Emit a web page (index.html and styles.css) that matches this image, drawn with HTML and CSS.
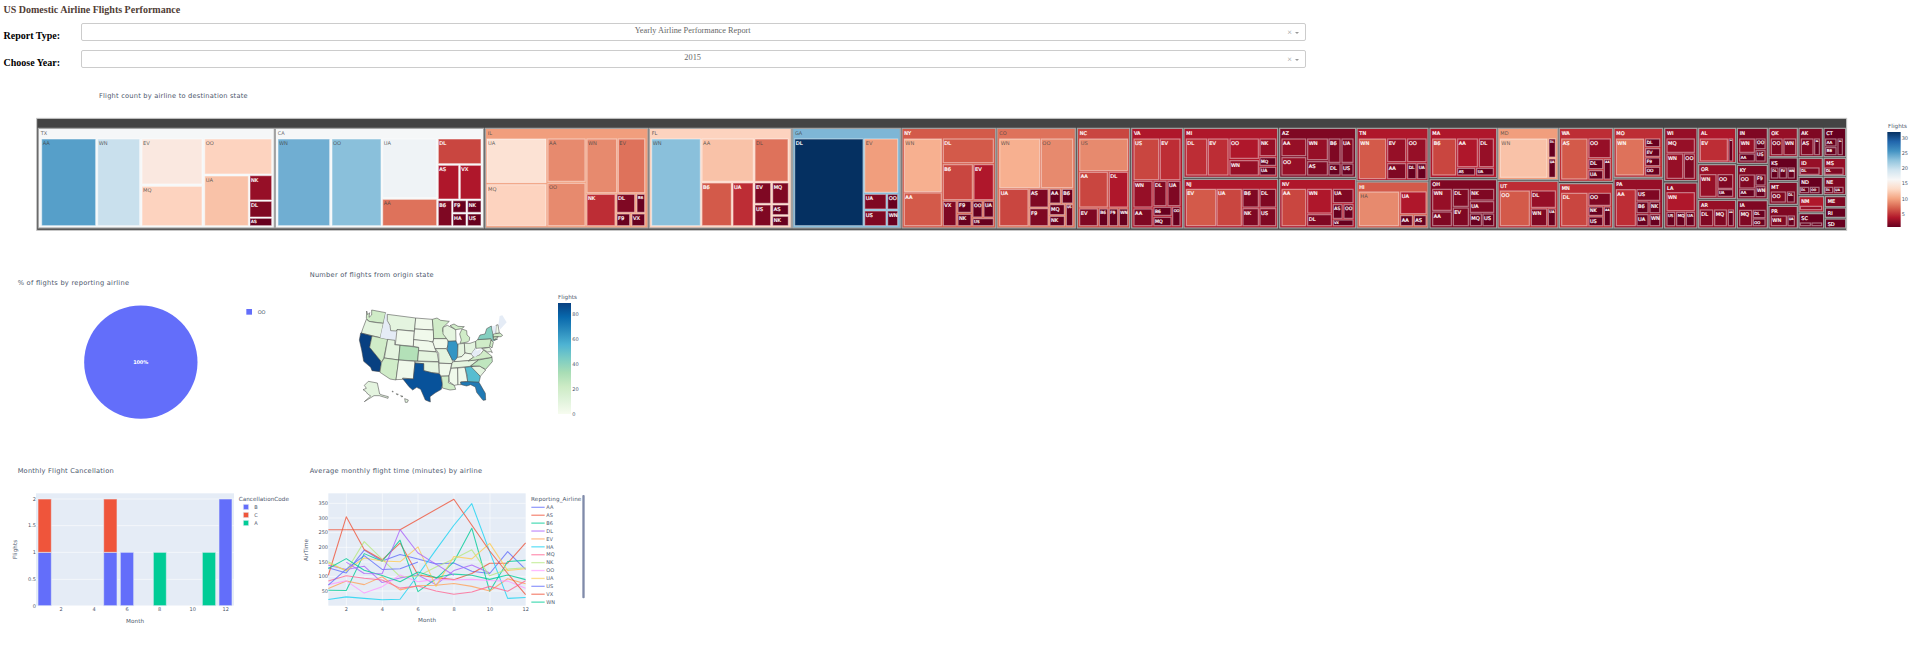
FILE: index.html
```html
<!DOCTYPE html>
<html lang="en">
<head>
<meta charset="utf-8">
<title>US Domestic Airline Flights Performance</title>
<link rel="stylesheet" href="styles.css">
</head>
<body>
<header class="controls">
  <h1 class="page-title">US Domestic Airline Flights Performance</h1>
  <div class="field">
    <span class="field-label">Report Type:</span>
    <div class="select"><span class="select-value">Yearly Airline Performance Report</span><span class="select-clear">×</span><span class="select-arrow"></span></div>
  </div>
  <div class="field">
    <span class="field-label">Choose Year:</span>
    <div class="select"><span class="select-value select-value-year">2015</span><span class="select-clear">×</span><span class="select-arrow"></span></div>
  </div>
</header>
<main>
  <svg class="treemap" viewBox="0 0 5754 528" id="treemap">
    <defs>
      <linearGradient id="rdbu" x1="0" y1="1" x2="0" y2="0">
        <stop offset="0" stop-color="#67001f"/><stop offset=".1" stop-color="#b2182b"/><stop offset=".2" stop-color="#d6604d"/><stop offset=".3" stop-color="#f4a582"/><stop offset=".4" stop-color="#fddbc7"/><stop offset=".5" stop-color="#f7f7f7"/><stop offset=".6" stop-color="#d1e5f0"/><stop offset=".7" stop-color="#92c5de"/><stop offset=".8" stop-color="#4393c3"/><stop offset=".9" stop-color="#2166ac"/><stop offset="1" stop-color="#053061"/>
      </linearGradient>
    </defs>
    <text class="title" x="297" y="41" textLength="446">Flight count by airline to destination state</text>
    <g id="cells"></g>
    <g transform="translate(4800 84)">
      <text class="legend-title" x="864" y="47" textLength="57">Flights</text>
      <rect x="862" y="60" width="40" height="285" fill="url(#rdbu)"/>
      <g class="tick"><text x="905" y="83">30</text><text x="905" y="128">25</text><text x="905" y="174">20</text><text x="905" y="220">15</text><text x="905" y="266">10</text><text x="905" y="311">5</text></g>
    </g>
  </svg>
  <div class="row">
    <svg class="panel" viewBox="0 0 900 585">
      <text class="title" x="53" y="75" textLength="334">% of flights by reporting airline</text>
      <circle cx="422.500" cy="306.500" r="170" fill="#636efa"/>
      <text class="pie-label" x="422" y="312" textLength="45">100%</text>
      <rect x="739" y="147" width="17" height="17" fill="#636efa"/>
      <text class="tick" x="773" y="162">OO</text>
    </svg>
    <svg class="panel" viewBox="0 0 900 585">
      <defs>
        <linearGradient id="gnbu" x1="0" y1="1" x2="0" y2="0">
          <stop offset="0" stop-color="#f7fcf0"/><stop offset=".125" stop-color="#e0f3db"/><stop offset=".25" stop-color="#ccebc5"/><stop offset=".375" stop-color="#a8ddb5"/><stop offset=".5" stop-color="#7bccc4"/><stop offset=".625" stop-color="#4eb3d3"/><stop offset=".75" stop-color="#2b8cbe"/><stop offset=".875" stop-color="#0868ac"/><stop offset="1" stop-color="#084081"/>
        </linearGradient>
      </defs>
      <text class="title" x="29" y="51" textLength="372">Number of flights from origin state</text>
      <g id="states" class="states"></g>
      <text class="legend-title" x="774" y="117" textLength="57">Flights</text>
      <rect x="774" y="129" width="39" height="333" fill="url(#gnbu)"/>
      <g class="tick"><text x="817" y="168">80</text><text x="817" y="242">60</text><text x="817" y="317">40</text><text x="817" y="392">20</text><text x="817" y="467">0</text></g>
    </svg>
  </div>
  <div class="row">
    <svg class="panel" viewBox="0 0 900 585">
      <text class="title" x="53" y="54" textLength="288">Monthly Flight Cancellation</text>
      <rect class="plot" x="108" y="115" width="594" height="338"/>
      <path class="grid" d="M108 132H702M108 212H702M108 292H702M108 373H702M108 452H702"/>
      <g class="bars">
        <rect x="114" y="292" width="40" height="160" fill="#636efa"/><rect x="114" y="132" width="40" height="160" fill="#ef553b"/>
        <rect x="311" y="292" width="40" height="160" fill="#636efa"/><rect x="311" y="132" width="40" height="160" fill="#ef553b"/>
        <rect x="361" y="292" width="40" height="160" fill="#636efa"/>
        <rect x="460" y="292" width="39" height="160" fill="#00cc96"/>
        <rect x="607" y="292" width="40" height="160" fill="#00cc96"/>
        <rect x="657" y="132" width="39" height="320" fill="#636efa"/>
        <rect x="730" y="148" width="16" height="16" fill="#636efa"/><rect x="730" y="172" width="16" height="16" fill="#ef553b"/><rect x="730" y="196" width="16" height="16" fill="#00cc96"/>
      </g>
      <g class="tick end"><text x="108" y="137">2</text><text x="108" y="217">1.5</text><text x="108" y="297">1</text><text x="108" y="378">0.5</text><text x="108" y="458">0</text></g>
      <g class="tick mid"><text x="183" y="468">2</text><text x="282" y="468">4</text><text x="381" y="468">6</text><text x="479" y="468">8</text><text x="578" y="468">10</text><text x="677" y="468">12</text></g>
      <text class="axis" x="378" y="504" textLength="54">Month</text>
      <text class="axis" transform="translate(51 312) rotate(-90)" textLength="58">Flights</text>
      <text class="legend-title" x="716" y="138" textLength="151">CancellationCode</text>
      <g class="tick"><text x="763" y="162">B</text><text x="763" y="186">C</text><text x="763" y="210">A</text></g>
    </svg>
    <svg class="panel" viewBox="15 0 900 585">
      <text class="title" x="44" y="54" textLength="517">Average monthly flight time (minutes) by airline</text>
      <rect class="plot" x="100" y="115" width="592" height="337"/>
      <path class="grid" d="M100 145H692M100 189H692M100 233H692M100 277H692M100 321H692M100 364H692M100 408H692M154 115V452M262 115V452M369 115V452M477 115V452M585 115V452"/>
      <g id="series" class="series"></g>
      <g class="tick end"><text x="99" y="150">350</text><text x="99" y="194">300</text><text x="99" y="238">250</text><text x="99" y="282">200</text><text x="99" y="326">150</text><text x="99" y="370">100</text><text x="99" y="413">50</text></g>
      <g class="tick mid"><text x="154" y="468">2</text><text x="262" y="468">4</text><text x="369" y="468">6</text><text x="477" y="468">8</text><text x="585" y="468">10</text><text x="692" y="468">12</text></g>
      <text class="axis" x="369" y="501" textLength="54">Month</text>
      <text class="axis" transform="translate(39 318) rotate(-90)" textLength="66">AirTime</text>
      <text class="legend-title" x="708" y="138" textLength="151">Reporting_Airline</text>
      <g id="legend"></g>
      <rect x="862" y="120" width="7" height="310" rx="3" fill="#808baa"/>
    </svg>
  </div>
</main>
<script src="charts.js"></script>
</body>
</html>
```
FILE: styles.css
```css
body {
  margin: 0;
  background: #fff;
  overflow: hidden;
  font-family: "Liberation Serif", "Times New Roman", serif;
}

.controls {
  box-sizing: border-box;
  height: 84px;
  padding: 5px 0 0 3.5px;
}

.page-title {
  margin: 0 0 8px;
  height: 10px;
  font-size: 10px;
  line-height: 10px;
  color: #503d36;
}

.field {
  display: flex;
  align-items: flex-start;
  height: 27px;
}

.field-label {
  width: 77.5px;
  padding-top: 7px;
  font-size: 10px;
  line-height: 12px;
  font-weight: bold;
  color: #000;
  white-space: nowrap;
}

.select {
  display: flex;
  box-sizing: border-box;
  width: 1225px;
  height: 18px;
  padding-right: 6px;
  border: 1px solid #ccc;
  border-radius: 2px;
  color: #666;
  font-size: 8.3px;
  line-height: 14px;
}

.select-value {
  flex: 1;
  padding-left: 16px;
  text-align: center;
}

.select-clear {
  color: #999;
  line-height: 17px;
}

.select-arrow {
  margin: 8px 0 0 3px;
  width: 0;
  height: 0;
  border: 2px solid transparent;
  border-top: 2.5px solid #999;
}

svg {
  display: block;
  font-family: "DejaVu Sans", Verdana, sans-serif;
}

.treemap {
  width: 1918px;
  height: 176px;
}

.row {
  display: flex;
  height: 195px;
}

.panel {
  width: 300px;
  height: 195px;
}

.title {
  font-size: 20px;
  fill: #4b566b;
}

.legend-title {
  font-size: 17px;
  fill: #4b566b;
}

.axis {
  font-size: 17px;
  fill: #4b566b;
}

.tick {
  font-size: 15px;
  fill: #4b566b;
}

.end { text-anchor: end; }
.mid { text-anchor: middle; }

.pie-label {
  font-size: 15px;
  font-weight: bold;
  text-anchor: middle;
  fill: #fff;
}

.plot { fill: #e5ecf6; }

.grid {
  stroke: #fff;
  stroke-width: 2.2;
  stroke-opacity: .8;
  fill: none;
}

.bars rect {
  stroke: #e5ecf6;
  stroke-opacity: .6;
  stroke-width: 3;
}

.series path {
  fill: none;
  stroke-width: 3.2;
  stroke-opacity: .8;
  stroke-linejoin: round;
}

.states path {
  stroke: #444;
  stroke-opacity: .8;
  stroke-width: 2;
  stroke-linejoin: round;
}

.states .no-data { stroke: none; }

.root { fill: #444; stroke: #c8c8c8; stroke-width: 3; }

.state {
  stroke: #a5a5a5;
  stroke-width: 3.5;
}

.leaf {
  stroke: #fff;
  stroke-opacity: .45;
  stroke-width: 3.5;
}

.cell-text { fill: #fff; stroke: #fff; stroke-width: .6; }
.cell-text.dark { fill: #444; stroke: none; fill-opacity: .85; }
```
FILE: charts.js
```js
const NS = 'http://www.w3.org/2000/svg';

function add(parent, tag, attrs, text) {
  const el = document.createElementNS(NS, tag);
  for (const k in attrs) el.setAttribute(k, attrs[k]);
  if (text) el.textContent = text;
  parent.appendChild(el);
  return el;
}

// Colour scale steps, from few flights (z) to many (f)
const scale = {
  z: '#67001f', y: '#7f0823', x: '#960f27', w: '#af172b', v: '#bd2d35', u: '#c94640',
  t: '#d35a4a', s: '#de725b', r: '#e78a6e', q: '#f19e7d', p: '#f7b090', o: '#f9c2a8',
  n: '#fdd3bf', m: '#fce2d4', l: '#fae8e0', k: '#eff3f6', K: '#f5f7f8', j: '#c9e0ed',
  i: '#8ac0db', h: '#70aed2', H: '#7eb6d6', g: '#569fc9', f: '#053061'
};

// Each section: x origin, states and leaves as "name colour x0 y0 x1 y1"
const sections = [
  [30, 'TX K 25 48 733 348',
   'AA g 34 80 198 342;WN j 202 80 330 342;EV l 335 80 517 217;MQ n 335 222 517 342;OO n 523 80 726 187;UA o 523 191 656 342;NK x 659 190 726 265;DL y 659 267 726 316;AS z 659 318 726 342'],
  [320, 'CA K -134 48 491 348;IL q 496 48 984 348',
   'WN h -127 80 30 342;OO i 35 80 184 342;UA k 187 80 351 258;AA s 187 261 351 342;DL u 354 80 484 156;AS w 354 159 417 262;VX w 420 159 484 262;B6 y 354 265 396 342;F9 z 398 265 439 302;NK z 442 265 484 302;HA z 398 305 439 342;US z 442 305 484 342;UA m 500 80 679 213;MQ n 500 217 679 342;AA r 683 80 796 209;OO r 683 213 796 342;WN r 800 80 891 243;NK v 800 246 886 342'],
  [610, 'FL n 118 48 544 348;GA H 548 48 871 348',
   'EV s 24 80 105 243;DL y 20 246 75 302;B6 z 80 246 105 302;F9 z 20 305 60 342;VX z 65 305 105 342;WN i 124 80 272 342;AA o 275 80 431 209;DL s 434 80 535 209;B6 t 275 212 365 342;UA v 368 212 430 342;EV y 434 212 483 275;MQ y 487 212 536 275;US y 434 278 483 342;AS z 487 278 536 309;NK z 487 312 536 342;DL f 553 80 760 342;EV q 763 80 864 242;UA y 763 246 829 292;US y 763 296 829 342;OO z 832 246 864 292;WN z 832 296 864 342'],
  [890, 'NY t 36 48 317 348;CO s 321 48 556 348;NC u 562 48 719 348',
   'WN p 42 80 155 240;AA t 42 242 155 342;DL t 159 80 311 153;B6 u 159 157 248 264;EV w 251 157 311 264;VX y 159 267 199 342;F9 z 203 267 244 302;NK z 203 306 244 342;OO z 248 267 277 316;UA z 281 267 311 316;US z 248 319 311 342;WN p 328 80 450 228;OO r 453 80 549 228;UA u 328 231 415 342;AS y 419 231 475 286;F9 y 419 289 475 342;AA z 479 231 512 274;B6 z 516 231 549 274;MQ z 479 277 524 309;NK z 479 312 524 342;US z 528 277 549 342;US r 568 80 714 177;AA u 568 180 653 286;DL w 657 180 714 286;EV y 568 290 623 342;B6 z 627 290 654 342;F9 z 657 290 684 342;WN z 687 290 714 342'],
  [1130, 'VA w 5 48 158 348;MI w 162 48 443 196;NJ w 162 201 443 348;AZ y 449 48 677 196;NV w 449 201 677 348',
   'US u 11 80 87 204;EV v 90 80 151 204;WN x 11 207 67 286;DL y 71 207 109 282;UA y 113 207 151 282;AA y 11 290 67 342;B6 z 71 285 124 311;MQ z 71 315 124 342;OO z 127 285 151 342;DL v 168 80 231 190;EV v 234 80 295 190;OO w 299 80 386 140;WN x 299 145 386 190;NK x 389 80 438 132;MQ z 389 136 438 161;UA z 389 165 438 190;EV t 168 231 258 342;UA u 260 231 335 342;B6 y 338 231 386 286;DL y 389 231 438 286;NK y 338 289 386 342;US y 389 289 438 342;AA x 455 80 528 132;OO x 455 136 528 190;WN x 532 80 593 144;AS y 532 148 593 190;B6 y 596 80 631 152;UA y 635 80 670 152;DL z 596 155 631 190;US z 635 155 670 190;AA u 455 231 528 342;WN w 532 231 605 304;DL y 532 307 605 342;UA y 609 231 670 273;AS z 609 277 637 320;OO z 641 277 670 320;VX z 609 323 670 342'],
  [1350, 'TN w 21 48 234 206;HI t 21 209 234 348;MA w 240 48 440 197;OH y 240 202 440 348;MD q 444 48 624 203;UT v 444 207 624 348;WA v 628 48 788 208;MN v 628 214 788 348',
   'WN t 27 80 108 201;EV x 112 80 168 150;OO x 172 80 229 150;AA y 112 154 168 201;DL z 172 154 199 201;UA z 202 154 229 201;HA r 27 239 147 342;UA w 151 239 229 306;AA z 151 310 188 342;AS z 192 310 229 342;B6 u 247 80 318 190;AA w 322 80 383 165;DL x 387 80 431 165;AS z 322 168 375 190;UA z 379 168 431 190;WN x 247 231 305 296;AA y 247 299 305 342;DL y 309 231 356 284;EV y 309 287 356 342;NK y 360 231 432 265;UA y 360 268 432 302;MQ z 360 305 395 342;US z 398 305 432 342;WN o 450 80 592 197;DL z 596 80 617 136;UA z 596 140 617 197;OO t 450 236 539 342;DL x 543 236 617 287;WN y 543 290 591 342;UA z 594 290 617 342;AS t 634 80 712 202;OO x 716 80 782 138;DL z 716 142 759 171;UA z 716 175 759 202;AA z 762 142 782 202;DL u 634 243 712 342;OO y 716 243 782 281;NK z 716 284 759 311;US z 716 314 759 342;AA z 762 284 782 342'],
  [1600, 'MO v 42 48 188 196;PA x 42 200 188 348;WI x 194 48 291 206;LA x 194 212 291 348;AL w 296 48 407 152;OR x 296 157 407 259;AR x 296 264 407 348;IN y 412 48 502 154;KY y 412 159 502 261;IA y 412 265 502 348;OK x 507 48 592 134;KS z 507 137 592 206;MT y 507 210 592 277;PR y 507 282 592 348;AK y 597 48 667 134;ID x 597 138 667 191;ND z 597 195 667 248;NM w 597 253 671 300;SC z 597 304 671 348;CT z 672 48 737 134;MS x 672 138 737 191;NE y 672 195 737 248;ME y 676 253 737 284;RI z 676 287 737 316;SD z 676 320 737 348',
   'WN s 48 80 132 190;DL z 136 80 180 105;EV z 136 109 180 134;F9 z 136 137 180 162;OO z 136 165 180 190;AA v 48 232 107 342;US y 110 232 180 266;B6 z 110 269 145 303;NK z 149 269 180 303;UA z 110 307 145 342;WN z 149 307 180 342;MQ x 200 80 284 122;WN x 200 125 249 200;OO y 252 125 284 200;WN w 200 241 284 297;US z 200 300 225 342;MQ z 229 300 255 342;UA z 258 300 284 342;EV v 300 80 383 148;DL z 386 80 399 148;WN x 300 187 349 254;OO y 353 187 399 230;UA z 353 232 399 254;DL y 300 293 339 342;MQ y 343 293 380 342;AA z 384 293 401 342;WN x 418 80 464 122;AA z 418 125 464 148;OO z 467 80 496 111;US z 467 115 496 148;OO y 418 188 464 229;AA z 418 232 464 255;F9 z 467 188 496 220;WN z 467 223 496 255;MQ y 418 294 456 342;DL z 459 294 496 318;OO z 459 320 496 342;OO y 513 80 547 129;WN y 551 80 588 129;DL z 513 167 535 199;EV z 538 167 560 199;WN z 563 167 584 199;OO y 513 239 557 271;DL z 561 239 584 271;WN y 513 311 560 342;UA z 563 311 584 342;AS y 603 80 640 129;DL z 643 80 659 129;DL y 600 167 658 188;DL z 600 225 627 243;OO z 630 225 658 243;. x 600 282 666 294;. z 600 332 632 342;. z 635 332 666 342;AA z 676 80 709 103;B6 z 676 106 709 129;DL z 713 80 728 129;DL y 674 167 730 188;DL z 674 225 699 243;UA z 702 225 730 243']
];

const cells = document.getElementById('cells');
cells.setAttribute('transform', 'translate(0 84)');
add(cells, 'rect', { class: 'root', x: 110, y: 19, width: 5430, height: 336 });

const parse = s => s.split(';').map(r => {
  const [name, c, ...n] = r.split(' ');
  return [name, c, ...n.map(Number)];
});

for (const [ox, states] of sections) {
  for (const [name, c, x0, y0, x1, y1] of parse(states)) {
    add(cells, 'rect', { class: 'state', x: ox * 3 + x0, y: y0 + 1, width: x1 - x0, height: y1 - y0 - 1, fill: scale[c] });
    const dark = 'KqnHs'.includes(c) ? ' dark' : '';
    add(cells, 'text', { class: 'cell-text' + dark, x: ox * 3 + x0 + 7, y: y0 + 21, 'font-size': 15 }, name);
  }
}
for (const [ox, , leaves] of sections) {
  for (const [name, c, x0, y0, x1, y1] of parse(leaves)) {
    const w = x1 - x0, h = y1 - y0;
    add(cells, 'rect', { class: 'leaf', x: ox * 3 + x0 + 1, y: y0 + 1, width: w - 2, height: h - 2, fill: scale[c] });
    if (name === '.') continue;
    const size = Math.min(15.5, (w - 5) / 1.7, h / 1.9);
    const dark = 'srqponmlkjihg'.includes(c) && !(name === 'WN' && ox === 1600) ? ' dark' : '';
    add(cells, 'text', { class: 'cell-text' + dark, x: ox * 3 + x0 + 4, y: y0 + 3 + size, 'font-size': size }, name);
  }
}

// State outlines: "fill points"
const A = '#f0f9eb', B = '#e4f4df', C = '#d0ecc8', N = '#e5ecf6';
const outlines = [
  [C, '200 153 203 164 209 158 207 172 215 165 215 150 257 158 250 190 222 186 207 184 199 175'],
  [B, '199 178 207 184 222 187 250 190 246 210 241 233 184 219 188 207'],
  ['#084081', '182 219 216 228 209 262 240 300 244 310 239 335 216 332 212 322 191 304 185 270 178 240'],
  [C, '216 228 263 238 251 296 245 305 240 300 209 262'],
  [N, '257 160 262 163 262 182 270 196 272 212 289 213 286 241 241 233 246 210 251 190'],
  [B, '262 163 347 174 344 213 291 209 289 213 272 212 270 196 262 182'],
  [A, '291 209 343 214 340 259 286 254'],
  [B, '263 238 285 241 284 254 300 256 296 300 253 294'],
  ['#b3e0b8', '300 256 356 262 353 303 296 300'],
  [C, '253 294 296 300 288 360 270 357 240 337 244 310 247 303'],
  [A, '296 300 345 304 340 357 308 354 308 358 288 359'],
  [A, '347 174 397 178 400 210 344 207'],
  [A, '344 207 400 210 401 237 399 246 341 239'],
  [A, '341 239 385 243 400 247 408 275 356 272 356 262 340 259'],
  [B, '356 272 411 276 416 305 353 303'],
  [B, '345 304 416 306 418 340 395 338 371 332 371 311 345 309'],
  ['#08529a', '345 309 371 311 371 332 395 338 421 342 427 372 424 388 405 399 390 410 391 426 376 420 362 388 350 382 338 390 327 380 308 356 340 357'],
  [C, '397 178 411 174 422 181 448 184 429 202 428 213 440 236 401 236 400 210'],
  [A, '401 236 441 236 447 252 439 266 405 266 399 247'],
  [B, '406 266 439 266 455 296 458 304 456 311 417 309 416 280'],
  [A, '417 310 455 311 447 348 422 348 418 340'],
  [C, '424 349 447 348 445 368 463 376 467 388 450 390 427 384 427 370'],
  [B, '429 202 442 196 467 209 468 243 446 244 440 236 429 222'],
  [C, '480 250 484 240 479 222 486 207 500 212 501 225 509 232 508 241 503 246'],
  [C, '450 197 462 192 474 199 493 200 485 206 467 209'],
  ['#3495c4', '444 244 468 243 474 256 472 290 467 303 457 300 442 270'],
  [B, '474 252 493 250 495 280 485 290 473 293'],
  [B, '493 250 510 250 527 244 528 262 514 282 495 279'],
  [A, '463 303 473 292 485 290 495 279 514 282 521 292 505 302 462 306'],
  [B, '456 310 460 305 505 302 536 299 510 319 453 325'],
  [A, '453 325 473 324 474 374 463 376 448 365 447 348'],
  [A, '473 324 495 322 503 364 482 366 483 374 474 374'],
  ['#56bdd0', '495 322 518 319 541 350 537 367 503 366 501 345'],
  ['#207ab5', '482 366 503 365 537 367 556 400 557 420 549 421 530 397 526 381 512 374 500 378 484 374'],
  [B, '513 320 540 318 557 330 541 349'],
  ['#bfe6bf', '512 318 536 300 576 292 577 305 557 328 538 318'],
  [C, '505 303 521 291 540 284 551 270 575 288 576 292'],
  [N, '514 282 528 263 530 272 545 266 540 280 525 292'],
  [C, '527 244 533 239 572 236 577 250 568 262 528 265'],
  ['#85cfc0', '533 239 540 225 555 222 560 206 574 198 579 225 580 238 593 237 580 243 572 236'],
  [N, '595 195 599 168 607 166 620 187 601 208'],
  [A, '588 196 594 194 598 220 587 220'],
  [N, '576 199 588 197 586 220 580 220'],
  [C, '580 222 600 219 608 226 603 230 580 231'],
  [C, '580 231 595 230 582 240'],
  [C, '573 240 580 247 576 264 569 258'],
  [B, '545 266 569 262 577 278 572 275 563 276 551 269'],
  [B, '205 364 232 369 239 402 246 405 265 410 264 415 238 407 222 407 193 425 212 408 203 402 198 395 189 389 199 385 193 376'],
  [B, '314 416 325 420 322 427 316 427'],
  [B, '302 407 309 409 305 411'], [B, '289 401 295 403 291 405'], [B, '277 393 280 395 277 396']
];
const map = document.getElementById('states');
for (const [fill, pts] of outlines) {
  const p = add(map, 'path', { d: 'M' + pts + 'Z', fill });
  if (fill === N) p.setAttribute('class', 'no-data');
}

// Airline series: name, colour, months, average air time
const blue = '#636efa', red = '#ef553b', green = '#00cc96', purple = '#ab63fa', orange = '#ffa15a',
  cyan = '#19d3f3', pink = '#ff6692', lime = '#b6e880', rose = '#ff97ff', gold = '#fecb52';
const lines = [
  ['AA', blue, [[1, 130], [2, 112], [3, 190], [4, 153], [5, 175], [6, 160], [7, 143], [8, 146], [9, 118], [10, 110], [11, 185], [12, 124]]],
  ['AS', red, [[1, 104], [2, 304], [3, 192], [4, 157], [5, 214], [6, 105], [7, 96], [8, 89], [9, 110], [10, 145], [11, 145], [12, 215]]],
  ['B6', green, [[1, 53], [2, 52], [3, 178], [4, 152], [5, 224], [6, 48], [7, 92], [8, 150], [9, 265], [10, 49], [11, 151], [12, 155]]],
  ['DL', purple, [[1, 138], [2, 124], [3, 135], [4, 79], [5, 95], [6, 105], [7, 72], [8, 120], [9, 139], [10, 112]]],
  ['EV', orange, [[1, 59], [2, 84], [3, 72], [4, 99], [5, 54], [6, 68], [7, 70], [8, 76], [9, 66], [10, 50], [11, 92], [12, 75]]],
  ['HA', cyan, [[1, 21], [2, 30], [3, 25], [4, 20], [5, 22], [6, 105], [7, 191], [8, 275], [9, 349], [10, 184], [11, 25], [12, 28]]],
  ['MQ', pink, [[1, 84], [2, 102], [3, 94], [4, 88], [5, 60], [6, 67], [7, 50], [8, 39], [9, 47], [10, 66], [11, 49], [12, 85]]],
  ['NK', lime, [[1, 150], [2, 118], [3, 219], [4, 159], [5, 99], [6, 101], [7, 132], [8, 160], [9, 191], [10, 102], [11, 125], [12, 130]]],
  ['OO', rose, [[1, 72], [2, 85], [3, 43], [4, 65], [5, 105], [6, 82], [7, 90], [8, 88], [9, 90], [10, 86], [11, 84], [12, 60]]],
  ['UA', gold, [[1, 145], [2, 120], [3, 163], [4, 153], [5, 150], [6, 201], [7, 66], [8, 168], [9, 160], [10, 213], [11, 120], [12, 126]]],
  ['US', blue, [[1, 70], [2, 125], [3, 171], [4, 124], [5, 126], [6, 149]]],
  ['VX', red, [[1, 260], [5, 260], [8, 364], [10, 187], [11, 110], [12, 38]]],
  ['WN', green, [[1, 127], [2, 161], [3, 121], [4, 103], [5, 82], [6, 115], [7, 96], [8, 108], [9, 104], [10, 90], [11, 105], [12, 89]]],
  ['', purple, [[2, 149], [3, 110], [4, 109], [5, 260], [6, 180], [7, 142], [8, 104]]]
];
const series = document.getElementById('series');
const legend = document.getElementById('legend');
lines.forEach(([name, stroke, pts], i) => {
  const d = 'M' + pts.map(([m, v]) => (100 + (m - 1) * 53.8).toFixed(1) + ' ' + (452 - v * 0.877).toFixed(1)).join('L');
  add(series, 'path', { d, stroke });
  if (!name) return;
  const y = 157 + i * 23.7;
  add(legend, 'path', { d: `M709 ${y}H749`, stroke, 'stroke-width': 4, 'stroke-opacity': .65 });
  add(legend, 'text', { class: 'tick', x: 754, y: y + 5 }, name);
});
```
